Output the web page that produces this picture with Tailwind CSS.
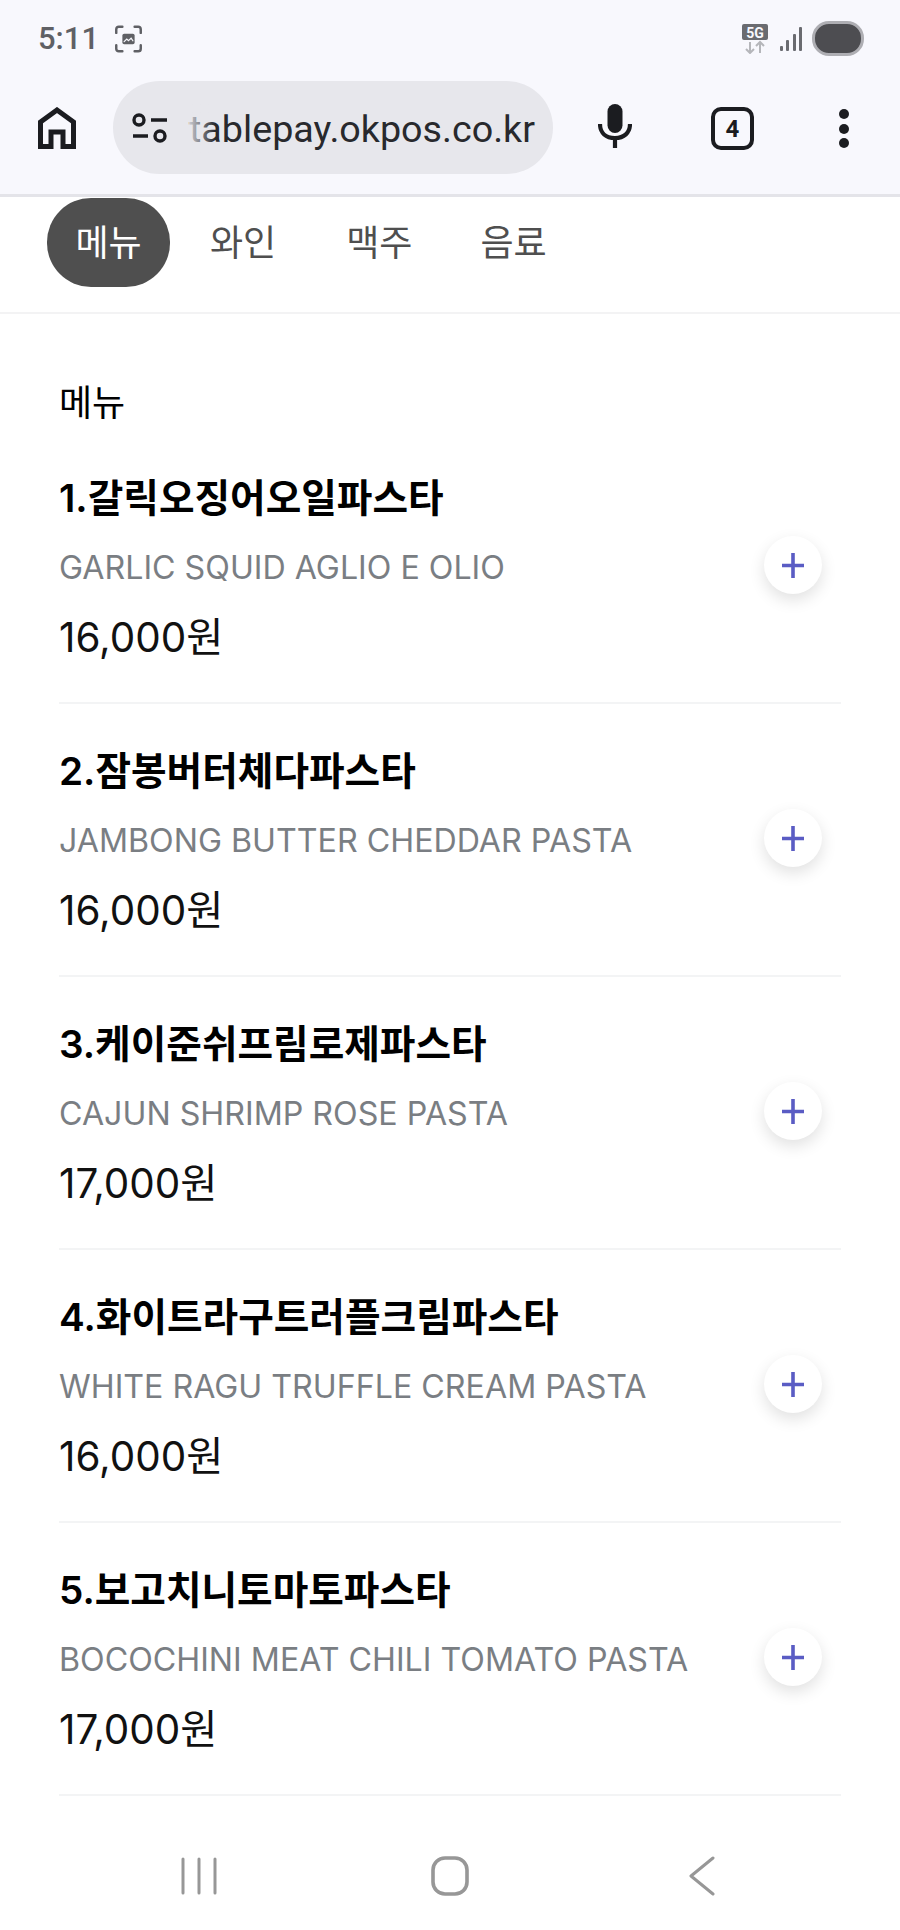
<!DOCTYPE html>
<html lang="ko">
<head>
<meta charset="utf-8">
<script src="https://cdn.jsdelivr.net/npm/@tailwindcss/browser@4"></script>
<title>메뉴</title>
</head>
<body class="m-0 bg-white">
<div class="w-[900px] h-[1930px] overflow-hidden flex flex-col bg-white font-['Inter','Noto_Sans_CJK_KR',sans-serif]">

  <!-- Browser chrome: status bar + address toolbar -->
  <header class="h-[197px] shrink-0 bg-[#f8f8fd] border-b-[3px] border-[#e4e4e9] flex flex-col">
    <div class="h-[81px] shrink-0 flex items-center pl-[38px] pr-[36px] pb-[4px]">
      <span class="text-[31px] leading-none font-['Roboto',sans-serif] font-medium text-[#5f6065]">5:11</span>
      <svg class="ml-[15px]" width="29" height="28" viewBox="0 0 32 32" fill="none" stroke="#5f6065" stroke-width="2.8" stroke-linecap="round">
        <path d="M2 9V5q0-3 3-3h4M23 2h4q3 0 3 3v4M30 23v4q0 3-3 3h-4M9 30H5q-3 0-3-3v-4"/>
        <rect x="9" y="10" width="14" height="12" rx="2" fill="#5f6065" stroke="none"/>
        <path d="M11 19l3-3 2 2 3-3 2 3" stroke="#f8f8fd" stroke-width="1.4"/>
      </svg>
      <div class="ml-auto flex items-center">
        <svg width="26" height="30" viewBox="0 0 26 30">
          <rect x="0" y="0" width="26" height="16" rx="2" fill="#6a6b70"/>
          <text x="13" y="13.500" text-anchor="middle" font-family="Roboto" font-weight="700" font-size="14" fill="#f8f8fd">5G</text>
          <path d="M8 18v11M4 25l4 4 4-4M18 29V18M14 22l4-4 4 4" fill="none" stroke="#b5b6ba" stroke-width="2"/>
        </svg>
        <svg class="ml-[12px]" width="22" height="24" viewBox="0 0 22 24" fill="#6a6b70">
          <rect x="0" y="19" width="3" height="5" rx="1"/><rect x="6" y="13" width="3" height="11" rx="1"/><rect x="13" y="7" width="3" height="17" rx="1"/><rect x="19" y="0" width="3" height="24" rx="1"/>
        </svg>
        <div class="ml-[10px] w-[52px] h-[35px] rounded-[17px] border-[3px] border-[#aeaeb3] bg-[#4d4d51]"></div>
      </div>
    </div>
    <div class="flex items-start relative">
      <svg class="ml-[38px] mt-[26px]" width="38" height="42" viewBox="0 0 38 42" fill="none" stroke="#1b1c20" stroke-width="5">
        <path d="M2.500 39.500V15L19 3l16.500 12v24.500H25V25H13v14.500z"/>
      </svg>
      <div class="ml-[37px] w-[440px] h-[93px] rounded-full bg-[#e7e7ec] flex items-center">
        <svg class="ml-[19px]" width="36" height="32" viewBox="0 0 36 32" fill="none" stroke="#1b1c20" stroke-width="3.4">
          <circle cx="7" cy="8" r="5"/><path d="M1 24h15M19 8h16"/><circle cx="28" cy="24" r="5"/>
        </svg>
        <div class="ml-[21px] relative text-[37.700px] leading-[48px] pt-[2px] text-[#28292d] whitespace-nowrap font-['Roboto',sans-serif]">tablepay.okpos.co.kr<div class="absolute left-0 top-0 bottom-0 w-[26px] bg-linear-to-r from-[#e7e7ec]/85 to-[#e7e7ec]/0"></div></div>
      </div>
      <svg class="ml-[45px] mt-[22px]" width="34" height="46" viewBox="0 0 34 46" fill="none">
        <rect x="9.500" y="1" width="15" height="29" rx="7.500" fill="#1b1c20"/>
        <path d="M2 21c0 9 6 14 15 14s15-5 15-14M17 35v10" stroke="#1b1c20" stroke-width="4.200"/>
      </svg>
      <div class="ml-[79px] mt-[26px] w-[43px] h-[43px] rounded-[10px] border-[4px] border-[#1b1c20] flex items-center justify-center text-[24px] leading-none font-bold text-[#1b1c20] font-['Roboto',sans-serif]">4</div>
      <div class="ml-[85px] mt-[28px] flex flex-col gap-[4.500px]">
        <span class="w-[10px] h-[10px] rounded-full bg-[#1b1c20]"></span>
        <span class="w-[10px] h-[10px] rounded-full bg-[#1b1c20]"></span>
        <span class="w-[10px] h-[10px] rounded-full bg-[#1b1c20]"></span>
      </div>
    </div>
  </header>

  <!-- Category tabs -->
  <nav class="h-[117px] shrink-0 border-b-2 border-[#f3f3f4] pl-[47px] pt-[1px] flex items-start text-[36px] leading-none text-[#4f4f4f]">
    <a class="w-[123px] h-[89px] rounded-[44px] bg-[#4f4f4f] text-white flex items-center justify-center">메뉴</a>
    <a class="ml-[40px] h-[89px] flex items-center">와인</a>
    <a class="ml-[70px] h-[89px] flex items-center">맥주</a>
    <a class="ml-[68px] h-[89px] flex items-center">음료</a>
  </nav>

  <main class="flex-1 px-[59px] pt-[61px]">
    <h2 class="text-[36px] leading-[56px] font-normal text-black">메뉴</h2>

    <section class="flex flex-col">
      <article class="h-[273px] pt-[39px] border-b-2 border-[#f3f4f5] flex justify-between">
        <div>
          <h3 class="text-[38.700px] leading-[56px] font-semibold text-black">1.갈릭오징어오일파스타</h3>
          <p class="mt-[20px] text-[32.200px] leading-[44px] text-[#7a7e83]">GARLIC SQUID AGLIO E OLIO</p>
          <p class="mt-[22px] text-[40.400px] leading-[52px] text-[#111]">16,000원</p>
        </div>
        <button class="w-[58px] h-[58px] mt-[66px] mr-[19px] shrink-0 rounded-full bg-white shadow-[0_6px_16px_rgba(0,0,0,0.12)] flex items-center justify-center"><svg width="22" height="25" viewBox="0 0 22 25" fill="none" stroke="#5a5cc4" stroke-width="3.600"><path d="M0 12.500h22M11 0v25"/></svg></button>
      </article>
      <article class="h-[273px] pt-[39px] border-b-2 border-[#f3f4f5] flex justify-between">
        <div>
          <h3 class="text-[38.700px] leading-[56px] font-semibold text-black">2.잠봉버터체다파스타</h3>
          <p class="mt-[20px] text-[32.200px] leading-[44px] text-[#7a7e83]">JAMBONG BUTTER CHEDDAR PASTA</p>
          <p class="mt-[22px] text-[40.400px] leading-[52px] text-[#111]">16,000원</p>
        </div>
        <button class="w-[58px] h-[58px] mt-[66px] mr-[19px] shrink-0 rounded-full bg-white shadow-[0_6px_16px_rgba(0,0,0,0.12)] flex items-center justify-center"><svg width="22" height="25" viewBox="0 0 22 25" fill="none" stroke="#5a5cc4" stroke-width="3.600"><path d="M0 12.500h22M11 0v25"/></svg></button>
      </article>
      <article class="h-[273px] pt-[39px] border-b-2 border-[#f3f4f5] flex justify-between">
        <div>
          <h3 class="text-[38.700px] leading-[56px] font-semibold text-black">3.케이준쉬프림로제파스타</h3>
          <p class="mt-[20px] text-[32.200px] leading-[44px] text-[#7a7e83]">CAJUN SHRIMP ROSE PASTA</p>
          <p class="mt-[22px] text-[40.400px] leading-[52px] text-[#111]">17,000원</p>
        </div>
        <button class="w-[58px] h-[58px] mt-[66px] mr-[19px] shrink-0 rounded-full bg-white shadow-[0_6px_16px_rgba(0,0,0,0.12)] flex items-center justify-center"><svg width="22" height="25" viewBox="0 0 22 25" fill="none" stroke="#5a5cc4" stroke-width="3.600"><path d="M0 12.500h22M11 0v25"/></svg></button>
      </article>
      <article class="h-[273px] pt-[39px] border-b-2 border-[#f3f4f5] flex justify-between">
        <div>
          <h3 class="text-[38.700px] leading-[56px] font-semibold text-black">4.화이트라구트러플크림파스타</h3>
          <p class="mt-[20px] text-[32.200px] leading-[44px] text-[#7a7e83]">WHITE RAGU TRUFFLE CREAM PASTA</p>
          <p class="mt-[22px] text-[40.400px] leading-[52px] text-[#111]">16,000원</p>
        </div>
        <button class="w-[58px] h-[58px] mt-[66px] mr-[19px] shrink-0 rounded-full bg-white shadow-[0_6px_16px_rgba(0,0,0,0.12)] flex items-center justify-center"><svg width="22" height="25" viewBox="0 0 22 25" fill="none" stroke="#5a5cc4" stroke-width="3.600"><path d="M0 12.500h22M11 0v25"/></svg></button>
      </article>
      <article class="h-[273px] pt-[39px] border-b-2 border-[#f3f4f5] flex justify-between">
        <div>
          <h3 class="text-[38.700px] leading-[56px] font-semibold text-black">5.보고치니토마토파스타</h3>
          <p class="mt-[20px] text-[32.200px] leading-[44px] text-[#7a7e83]">BOCOCHINI MEAT CHILI TOMATO PASTA</p>
          <p class="mt-[22px] text-[40.400px] leading-[52px] text-[#111]">17,000원</p>
        </div>
        <button class="w-[58px] h-[58px] mt-[66px] mr-[19px] shrink-0 rounded-full bg-white shadow-[0_6px_16px_rgba(0,0,0,0.12)] flex items-center justify-center"><svg width="22" height="25" viewBox="0 0 22 25" fill="none" stroke="#5a5cc4" stroke-width="3.600"><path d="M0 12.500h22M11 0v25"/></svg></button>
      </article>
    </section>
  </main>

  <!-- Android navigation bar -->
  <footer class="h-[134px] shrink-0 bg-white flex items-start">
    <svg class="ml-[180px] mt-[61px]" width="38" height="38" viewBox="0 0 38 38" fill="none" stroke="#979797" stroke-width="3" stroke-linecap="round">
      <path d="M3 2v34M19 2v34M35 2v34"/>
    </svg>
    <svg class="ml-[212px] mt-[60px]" width="40" height="40" viewBox="0 0 40 40" fill="none" stroke="#979797" stroke-width="3.600">
      <rect x="3" y="2" width="34" height="36" rx="12"/>
    </svg>
    <svg class="ml-[217px] mt-[60px]" width="30" height="40" viewBox="0 0 30 40" fill="none" stroke="#979797" stroke-width="3" stroke-linecap="round" stroke-linejoin="round">
      <path d="M26 2L4 20l22 18"/>
    </svg>
  </footer>
</div>
</body>
</html>
